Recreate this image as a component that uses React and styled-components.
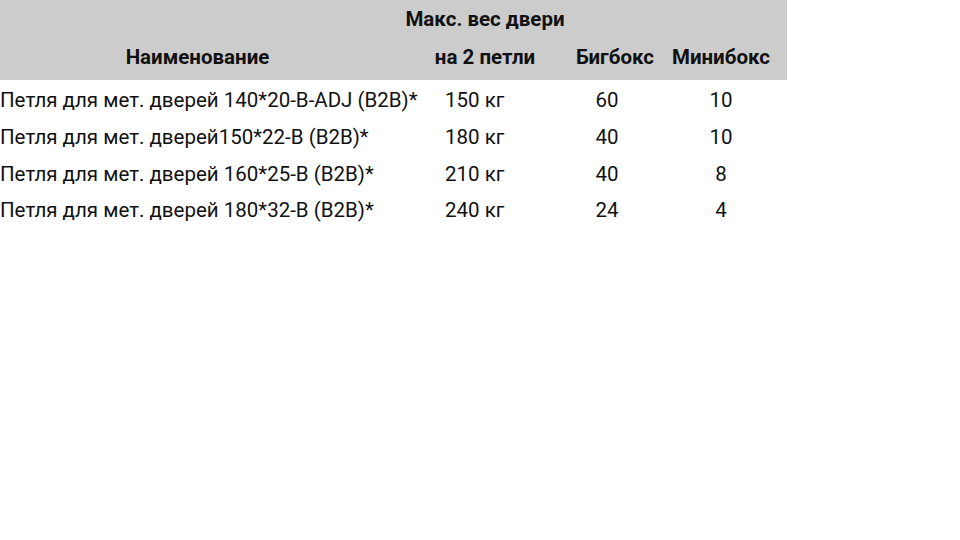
import React from 'react';
import styled, { createGlobalStyle } from 'styled-components';

const GlobalStyle = createGlobalStyle`
  html, body {
    margin: 0;
    padding: 0;
    background: #ffffff;
  }
  body {
    font-family: Roboto, "Liberation Sans", sans-serif;
    color: #111111;
  }
`;

const Table = styled.div`
  width: 787px;
`;

const Row = styled.div`
  display: grid;
  grid-template-columns: 395px 180px 80px 132px;
`;

const Head = styled(Row)`
  background: #cccccc;
  height: 80px;
`;

const Body = styled.div`
  padding-top: 2px;
`;

const HeadCell = styled.div`
  box-sizing: border-box;
  padding-bottom: 5px;
  display: flex;
  flex-direction: column;
  justify-content: flex-end;
  align-items: center;
  text-align: center;
  font-size: 20.5px;
  font-weight: 700;
  line-height: 38px;
  white-space: nowrap;
`;

const Cell = styled.div`
  height: 36.7px;
  display: flex;
  align-items: center;
  font-size: 20.5px;
  white-space: nowrap;
  justify-content: ${(p) => (p.$center ? 'center' : 'flex-start')};
  padding-left: ${(p) => p.$pad || 0}px;
  padding-right: ${(p) => p.$padR || 0}px;
  box-sizing: border-box;
`;

const rows = [
  ['Петля для мет. дверей 140*20-B-ADJ (B2B)*', '150 кг', '60', '10'],
  ['Петля для мет. дверей150*22-B (B2B)*', '180 кг', '40', '10'],
  ['Петля для мет. дверей 160*25-B (B2B)*', '210 кг', '40', '8'],
  ['Петля для мет. дверей 180*32-B (B2B)*', '240 кг', '24', '4'],
];

export default function App() {
  return (
    <>
      <GlobalStyle />
      <Table>
        <Head>
          <HeadCell>Наименование</HeadCell>
          <HeadCell>
            <span>Макс. вес двери</span>
            <span>на 2 петли</span>
          </HeadCell>
          <HeadCell>Бигбокс</HeadCell>
          <HeadCell>Минибокс</HeadCell>
        </Head>
        <Body>
          {rows.map((r) => (
            <Row key={r[0]}>
              <Cell>{r[0]}</Cell>
              <Cell $pad={50}>{r[1]}</Cell>
              <Cell $center $padR={16}>{r[2]}</Cell>
              <Cell $center>{r[3]}</Cell>
            </Row>
          ))}
        </Body>
      </Table>
    </>
  );
}
